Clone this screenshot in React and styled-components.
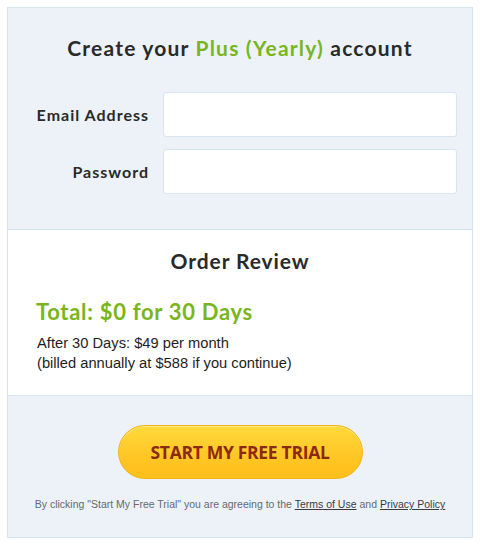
import React from "react";
import styled, { createGlobalStyle } from "styled-components";

const Global = createGlobalStyle`
  html, body { margin: 0; padding: 0; background: #ffffff; }
  body { font-family: "Liberation Sans", Arial, sans-serif; }
`;

const Page = styled.div`
  padding: 7px;
`;

const Card = styled.div`
  width: 464px;
  border: 1px solid #d7e5f0;
  background: #ecf2f8;
`;

const Section = styled.section`
  background: ${(p) => (p.$white ? "#ffffff" : "#ecf2f8")};
  border-top: ${(p) => (p.$divider ? "1px solid #d7e5f0" : "none")};
  padding: ${(p) => p.$pad};
`;

const Title = styled.h1`
  margin: 0;
  font-family: Lato, "Open Sans", sans-serif;
  font-weight: 700;
  font-size: 21px;
  line-height: 24px;
  letter-spacing: 1.2px;
  color: #2a2a2a;
  text-align: center;
`;

const Green = styled.span`
  color: #7ab51d;
`;

const Form = styled.div`
  display: grid;
  grid-template-columns: 141px 294px;
  column-gap: 14px;
  row-gap: 12px;
  margin-top: 32px;
  align-items: center;
`;

const Label = styled.label`
  font-family: Lato, "Open Sans", sans-serif;
  font-weight: 700;
  font-size: 16px;
  color: #2a2a2a;
  text-align: right;
  letter-spacing: 1px;
`;

const Input = styled.input`
  box-sizing: border-box;
  height: 45px;
  width: 100%;
  border: 1px solid #d7e5f0;
  border-radius: 3px;
  background: #ffffff;
  outline: none;
  padding: 0 10px;
`;

const Heading = styled.h2`
  margin: 0;
  font-family: Lato, "Open Sans", sans-serif;
  font-weight: 700;
  font-size: 21px;
  line-height: 24px;
  letter-spacing: 0.9px;
  color: #2a2a2a;
  text-align: center;
`;

const Total = styled.div`
  margin-top: 26px;
  font-family: Lato, "Open Sans", sans-serif;
  font-weight: 700;
  font-size: 22px;
  line-height: 26px;
  letter-spacing: 0.7px;
  color: #7ab51d;
`;

const Detail = styled.p`
  margin: 8px 0 0 1px;
  font-size: 14.7px;
  line-height: 20px;
  color: #1e1e1e;
`;

const ButtonRow = styled.div`
  display: flex;
  justify-content: center;
`;

const CTA = styled.button`
  width: 245px;
  height: 54px;
  border-radius: 27px;
  border: 1px solid #f0b414;
  background: linear-gradient(#ffd93c, #ffc624 60%, #ffbf1c);
  box-shadow: inset 0 1px 0 rgba(255, 240, 160, 0.7);
  color: #8a2a0e;
  font-family: "Open Sans", sans-serif;
  font-weight: 700;
  font-size: 17.5px;
  letter-spacing: -0.3px;
  cursor: pointer;
`;

const Legal = styled.p`
  margin: 18px 0 0;
  text-align: center;
  font-size: 10.5px;
  line-height: 14px;
  color: #666a6e;
`;

const LegalLink = styled.a`
  color: #3c3c3c;
  text-decoration: underline;
`;

export default function App() {
  return (
    <>
      <Global />
      <Page>
        <Card>
          <Section $pad="28px 0 35px">
            <Title>
              Create your <Green>Plus (Yearly)</Green> account
            </Title>
            <Form>
              <Label htmlFor="email">Email Address</Label>
              <Input id="email" type="email" />
              <Label htmlFor="password">Password</Label>
              <Input id="password" type="password" />
            </Form>
          </Section>
          <Section $white $divider $pad="19px 28px 22px">
            <Heading>Order Review</Heading>
            <Total>Total: $0 for 30 Days</Total>
            <Detail>
              After 30 Days: $49 per month
              <br />
              (billed annually at $588 if you continue)
            </Detail>
          </Section>
          <Section $divider $pad="29px 0 26px">
            <ButtonRow>
              <CTA>START MY FREE TRIAL</CTA>
            </ButtonRow>
            <Legal>
              By clicking "Start My Free Trial" you are agreeing to the{" "}
              <LegalLink href="#">Terms of Use</LegalLink> and{" "}
              <LegalLink href="#">Privacy Policy</LegalLink>
            </Legal>
          </Section>
        </Card>
      </Page>
    </>
  );
}
